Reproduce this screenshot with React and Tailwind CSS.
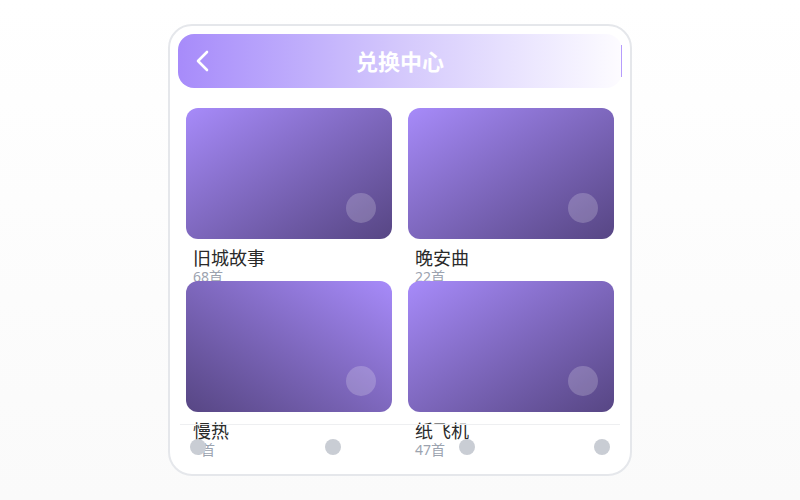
import React from "react";

const items = [
  { title: "旧城故事", count: "68首", dir: "bg-linear-to-br" },
  { title: "晚安曲", count: "22首", dir: "bg-linear-to-br" },
  { title: "慢热", count: "4首", dir: "bg-linear-to-bl" },
  { title: "纸飞机", count: "47首", dir: "bg-linear-to-br" },
];

const App = () => {
  return (
    <div
      className="w-[800px] h-[500px] flex items-center justify-center bg-linear-to-b from-white to-[#fafafa]"
      style={{ fontFamily: '"Noto Sans", "Noto Sans CJK SC", sans-serif' }}
    >
      {/* Phone frame */}
      <div className="relative w-[464px] h-[452px] rounded-[24px] border-2 border-[#e5e7eb] bg-white overflow-hidden">
        {/* Header */}
        <div className="p-2">
          <div className="relative h-[54px] rounded-[16px] bg-linear-to-r from-[#a78bfa] via-[#d4c8fc] to-[#fdfcff] flex items-center">
            <svg className="ml-[15px] w-[20px] h-[24px]" viewBox="0 0 20 24" fill="none">
              <polyline points="14,3 5,12 14,21" stroke="white" strokeWidth="2.6" strokeLinecap="round" strokeLinejoin="round" />
            </svg>
            <h1 className="absolute inset-0 flex items-center justify-center text-[22px] font-bold text-white">
              兑换中心
            </h1>
            <span className="ml-auto w-px h-[32px] bg-[#b69cfc]" />
          </div>
        </div>

        {/* Cards */}
        <div className="grid grid-cols-2 gap-x-4 gap-y-2 px-4 pt-3">
          {items.map((item, i) => (
            <div key={i} className="flex flex-col">
              <div className={`relative h-[131px] rounded-[12px] ${item.dir} from-[#a78bfa] to-[#574684]`}>
                <div className="absolute right-4 bottom-4 w-[30px] h-[30px] rounded-full bg-white/20" />
              </div>
              <div className="h-[25px] mt-[9px] pl-[7px]">
                <p className="text-[18px] leading-[21px] text-[#2a2a2a]">{item.title}</p>
                <p className="text-[14px] leading-[16px] text-[#9ca3af]">{item.count}</p>
              </div>
            </div>
          ))}
        </div>

        {/* Bottom bar */}
        <div className="absolute left-[10px] right-[10px] bottom-[6px] h-[44px] border-t border-[#eeeff1] flex items-center justify-between px-[10px]">
          {[0, 1, 2, 3].map((d) => (
            <span key={d} className="w-4 h-4 rounded-full bg-[#c9cdd4]" />
          ))}
        </div>
      </div>
    </div>
  );
};

export default App;
